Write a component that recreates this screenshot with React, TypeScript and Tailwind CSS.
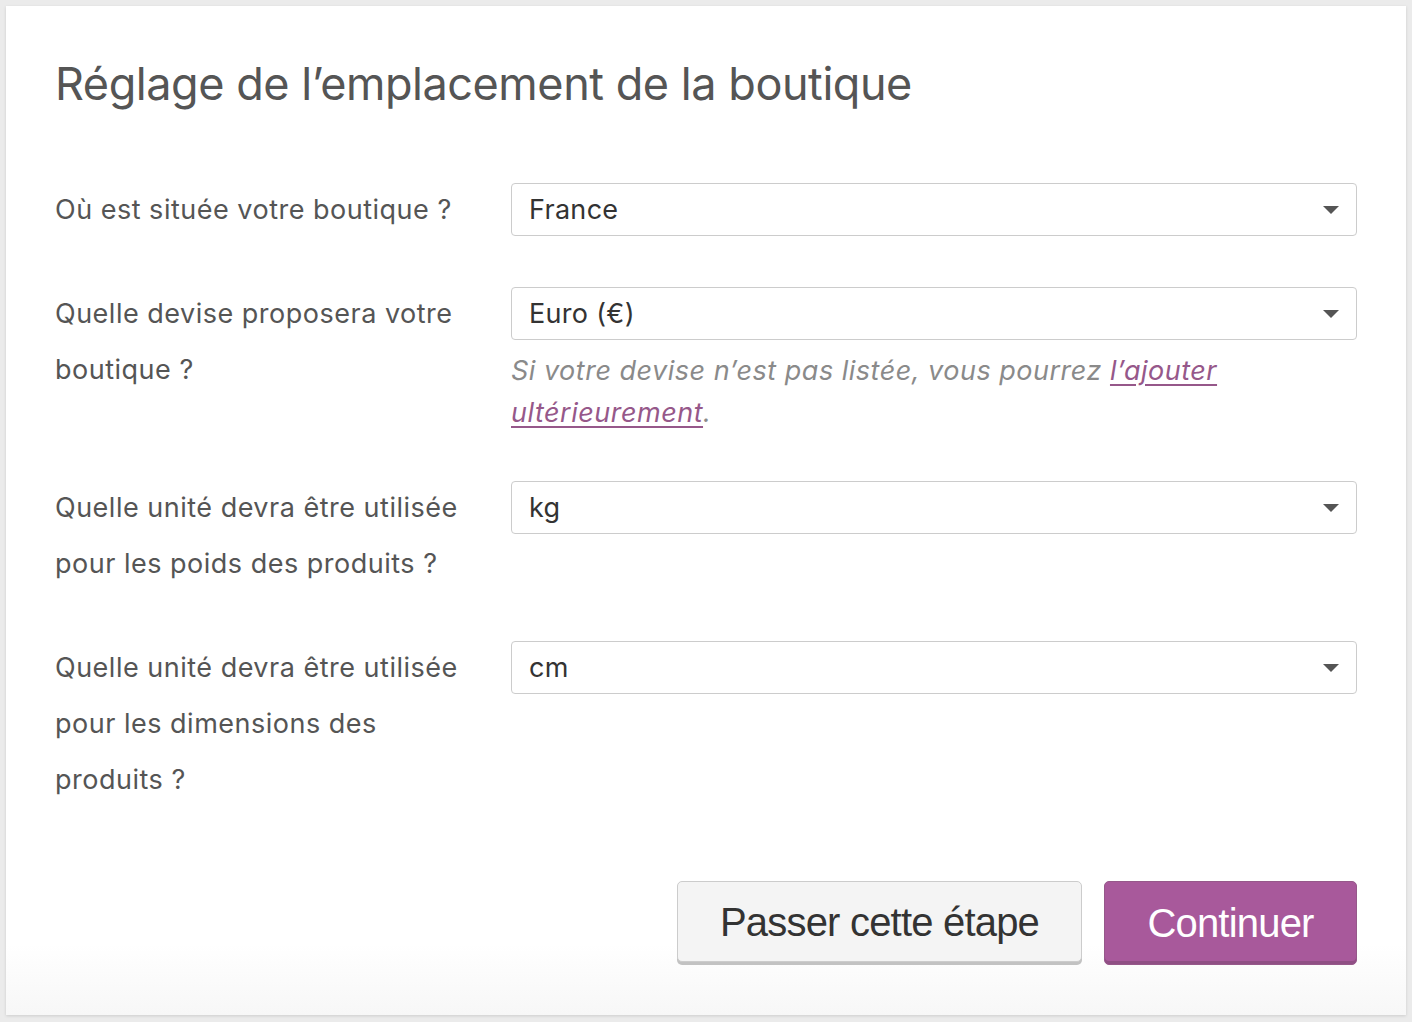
import React from 'react';

const Select = ({ value }: { value: string }) => (
  <div className="relative flex items-center h-[53px] w-full rounded-[4px] border border-[#cccccc] bg-white pl-[17px] pr-[40px] text-[27px] tracking-[0.3px] text-[#333333]">
    <span className="pt-[1px]">{value}</span>
    <svg className="absolute right-[17px] top-[22px]" width="16" height="8" viewBox="0 0 16 8">
      <path d="M0 0 L16 0 L8 8 Z" fill="#555555" />
    </svg>
  </div>
);

const Row = ({ label, children }: { label: React.ReactNode; children: React.ReactNode }) => (
  <div className="flex">
    <div className="w-[456px] shrink-0 text-[27px] tracking-[0.5px] leading-[56px] text-[#555555]">{label}</div>
    <div className="flex-1 pt-[1px]">{children}</div>
  </div>
);

export default function App() {
  return (
    <div className="min-h-[1022px] bg-[#ebebeb] p-[6px] font-['Inter','Liberation_Sans',sans-serif]">
      <div className="w-[1400px] bg-gradient-to-b from-white from-[93%] to-[#f7f7f7] shadow-[0_1px_3px_rgba(0,0,0,0.13)] px-[49px] pt-[50px] pb-[50px]">
        <h1 className="text-[45px] leading-[56px] text-[#555555] tracking-[-0.45px]">
          Réglage de l’emplacement de la boutique
        </h1>

        <div className="mt-[70px] flex flex-col gap-[48px]">
          <Row label="Où est située votre boutique ?">
            <Select value="France" />
          </Row>

          <Row label={<>Quelle devise proposera votre<br />boutique ?</>}>
            <Select value="Euro (€)" />
            <p className="mt-[10px] mb-[-2px] pr-[120px] text-[27px] tracking-[0.5px] leading-[42px] italic text-[#8a8a8a]">
              Si votre devise n’est pas listée, vous pourrez{' '}
              <a href="#" className="text-[#96588a] underline underline-offset-[4px]">l’ajouter ultérieurement</a>.
            </p>
          </Row>

          <Row label={<>Quelle unité devra être utilisée<br />pour les poids des produits ?</>}>
            <Select value="kg" />
          </Row>

          <Row label={<>Quelle unité devra être utilisée<br />pour les dimensions des<br />produits ?</>}>
            <Select value="cm" />
          </Row>
        </div>

        <div className="mt-[73px] flex justify-end gap-[22px] font-['Liberation_Sans',Arial,sans-serif]">
          <button className="h-[81px] w-[405px] rounded-[5px] border border-[#cccccc] bg-[#f4f4f4] text-[40px] tracking-[-0.8px] text-[#333333] shadow-[0_3px_0_#c2c2c2]">
            Passer cette étape
          </button>
          <button className="h-[84px] w-[253px] rounded-[5px] border border-[#96588a] bg-[#a8599b] text-[40px] tracking-[-0.8px] text-white shadow-[inset_0_-3px_0_#8f4f84]">
            Continuer
          </button>
        </div>
      </div>
    </div>
  );
}
